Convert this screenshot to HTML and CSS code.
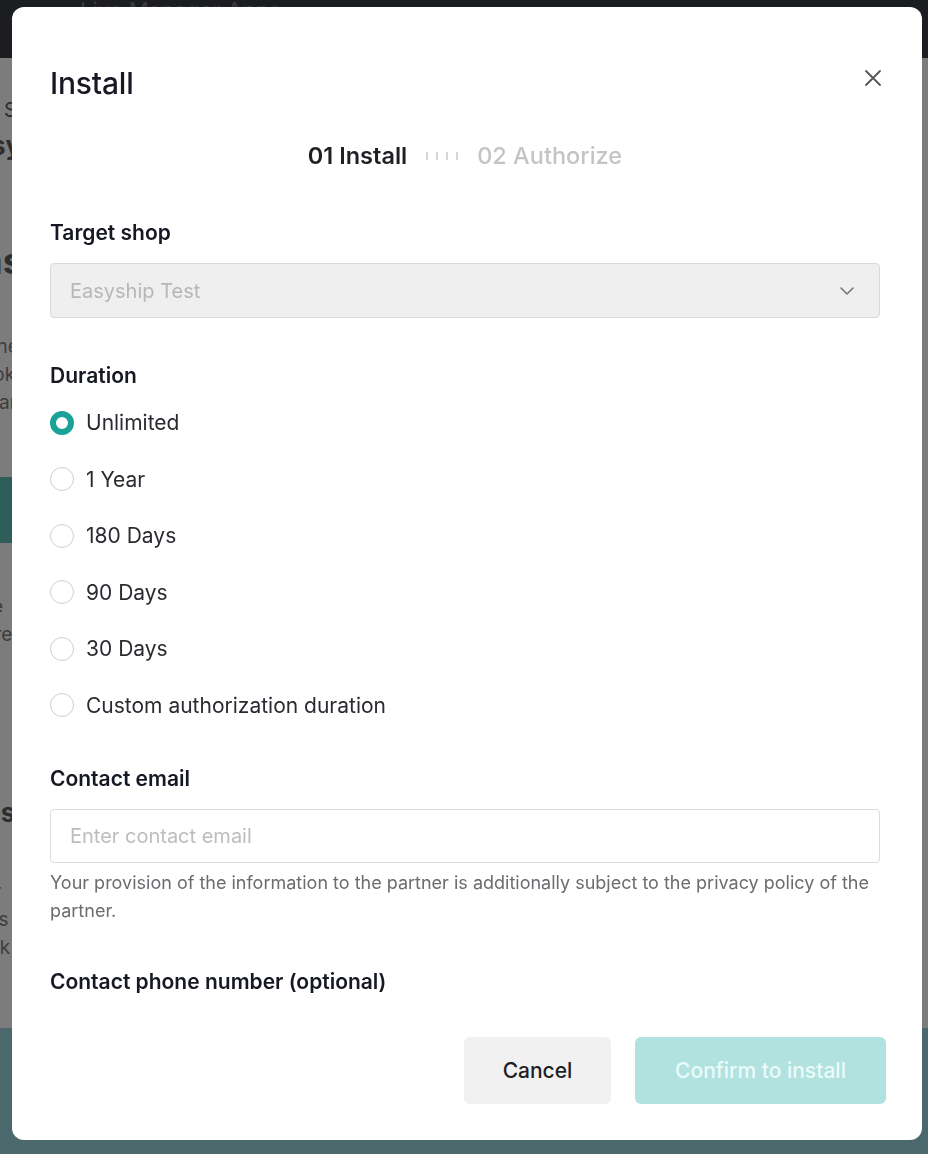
FILE: index.html
```html
<!DOCTYPE html>
<html lang="en">
<head>
  <meta charset="UTF-8" />
  <meta name="viewport" content="width=device-width, initial-scale=1.0"/>
  <title>Install</title>
  <link rel="stylesheet" href="styles.css">
</head>
<body>
  <!-- page behind the dialog -->
  <div class="page">
    <div class="page-top">Live Manager Apps</div>
    <div class="page-main">
      <div class="page-col">
        <p class="pg-small">App Store</p>
        <p class="pg-bold">Easyship</p>
        <p class="pg-big">Easyship</p>
        <p class="pg-text">Connection<br>Tiktok Shop<br>to start</p>
        <div class="pg-btn"></div>
        <p class="pg-text">Ease<br>Score<br>over</p>
        <p class="pg-bold pg-amp">Tips &amp;</p>
        <p class="pg-text">Your<br>Sales<br>Track</p>
      </div>
    </div>
    <div class="page-band"></div>
  </div>

  <div class="overlay">
    <div class="modal">
      <div class="modal-head">
        <h1>Install</h1>
        <button class="close-btn" aria-label="Close">
          <svg width="18" height="18" viewBox="0 0 18 18"><path d="M2 2L16 16M16 2L2 16" stroke="#555" stroke-width="1.8" stroke-linecap="round"/></svg>
        </button>
      </div>

      <div class="modal-body">
        <div class="steps">
          <span class="step active">01 Install</span>
          <span class="step-dots"><i></i><i></i><i></i><i></i></span>
          <span class="step">02 Authorize</span>
        </div>

        <div class="field field-shop">
          <div class="field-label">Target shop</div>
          <div class="select">
            <span>Easyship Test</span>
            <svg width="16" height="10" viewBox="0 0 16 10"><path d="M2 2L8 8L14 2" fill="none" stroke="#777" stroke-width="1.6" stroke-linecap="round" stroke-linejoin="round"/></svg>
          </div>
        </div>

        <div class="field">
          <div class="field-label">Duration</div>
          <div class="radios">
            <label class="radio checked"><span class="dot"></span>Unlimited</label>
            <label class="radio"><span class="dot"></span>1 Year</label>
            <label class="radio"><span class="dot"></span>180 Days</label>
            <label class="radio"><span class="dot"></span>90 Days</label>
            <label class="radio"><span class="dot"></span>30 Days</label>
            <label class="radio"><span class="dot"></span>Custom authorization duration</label>
          </div>
        </div>

        <div class="field field-email">
          <div class="field-label">Contact email</div>
          <input class="text-input" type="text" placeholder="Enter contact email" />
          <p class="hint">Your provision of the information to the partner is additionally subject to the privacy policy of the partner.</p>
        </div>

        <div class="field field-phone">
          <div class="field-label">Contact phone number (optional)</div>
        </div>
      </div>

      <div class="modal-foot">
        <button class="btn btn-cancel">Cancel</button>
        <button class="btn btn-confirm">Confirm to install</button>
      </div>
    </div>
  </div>
</body>
</html>
```

FILE: styles.css
```css
* {
  box-sizing: border-box;
}

html, body {
  margin: 0;
  height: 100%;
  overflow: hidden;
}

body {
  font-family: Inter, "Noto Sans", sans-serif;
  color: #161823;
  background: #7c7c7c;
}

/* background page (already dimmed) */
.page {
  display: flex;
  flex-direction: column;
  height: 100%;
}

.page-top {
  height: 58px;
  background: #1c1d21;
  color: #3a3b40;
  font-size: 22px;
  padding: 0 0 0 80px;
  line-height: 20px;
}

.page-main {
  flex: 1;
  background: #7c7c7c;
}

.page-col {
  width: 12px;
  overflow: hidden;
  color: #2e2e2e;
}

.page-col p {
  margin: 0;
  margin-left: -40px;
  white-space: nowrap;
}

.pg-small {
  font-size: 20px;
  padding-top: 40px;
}

.pg-bold {
  font-size: 26px;
  font-weight: 700;
  margin-top: 8px !important;
}

.pg-big {
  font-size: 36px;
  font-weight: 700;
  margin-top: 78px !important;
}

.pg-text {
  font-size: 19px;
  line-height: 28px;
  margin-top: 50px !important;
  color: #3d3d3d;
}

.pg-btn {
  width: 56px;
  height: 66px;
  margin-top: 60px;
  background: #2f5e5a;
}

.pg-amp {
  margin-top: 120px !important;
}

.page-band {
  height: 126px;
  background: #4b686c;
}

/* dialog */
.overlay {
  position: fixed;
  inset: 0;
  padding: 7px 6px 14px 12px;
}

.modal {
  height: 1133px;
  background: #fff;
  border-radius: 12px;
  display: flex;
  flex-direction: column;
  overflow: hidden;
}

.modal-head {
  display: flex;
  justify-content: space-between;
  align-items: center;
  padding: 58px 40px 0 38px;
}

.modal-head h1 {
  margin: 0;
  font-size: 30px;
  font-weight: 500;
  letter-spacing: -0.2px;
}

.close-btn {
  border: 0;
  background: none;
  padding: 0;
  margin-top: -8px;
  cursor: pointer;
}

.modal-body {
  flex: 1;
  overflow: hidden;
  padding: 0 42px 0 38px;
}

.steps {
  display: flex;
  justify-content: center;
  align-items: center;
  gap: 19px;
  margin: 40px 0 0 0;
  font-size: 23.5px;
  font-weight: 500;
}

.step {
  color: #c4c4c6;
}

.step.active {
  color: #1f1f24;
  font-weight: 600;
}

.step-dots {
  display: flex;
  gap: 8px;
}

.step-dots i {
  width: 2px;
  height: 8px;
  background: #d6d6d8;
}

.field {
  margin-top: 45px;
}

.field-shop {
  margin-top: 50px;
}

.field-email {
  margin-top: 48px;
}

.field-phone {
  margin-top: 44px;
}

.field-label {
  font-size: 21px;
  font-weight: 600;
  margin-bottom: 18px;
}

.select {
  height: 55px;
  display: flex;
  justify-content: space-between;
  align-items: center;
  padding: 0 24px 0 19px;
  background: #efefef;
  border: 1px solid #d9d9db;
  border-radius: 4px;
  font-size: 20px;
  color: #b7b7ba;
}

.radios {
  display: flex;
  flex-direction: column;
  gap: 31.6px;
  margin-top: 22px;
}

.radio {
  display: flex;
  align-items: center;
  gap: 12px;
  font-size: 21px;
  color: #2a2a30;
  height: 25px;
}

.radio .dot {
  width: 24px;
  height: 24px;
  border-radius: 50%;
  border: 1.5px solid #cfcfd2;
  background: #fff;
}

.radio.checked .dot {
  border: 6.5px solid #1aa198;
}

.text-input {
  display: block;
  width: 100%;
  height: 54px;
  border: 1px solid #dcdcde;
  border-radius: 4px;
  padding: 0 19px;
  font-family: inherit;
  font-size: 20px;
  color: #161823;
  outline: none;
}

.text-input::placeholder {
  color: #bdbdc0;
}

.hint {
  margin: 6px 0 0;
  font-size: 18px;
  line-height: 28px;
  color: #6c6c70;
}

.modal-foot {
  display: flex;
  justify-content: flex-end;
  gap: 24px;
  padding: 0 36px 36px 0;
}

.btn {
  height: 67px;
  border: 0;
  border-radius: 6px;
  font-family: inherit;
  font-size: 21px;
  font-weight: 500;
  padding: 0 38px;
  cursor: pointer;
}

.btn-cancel {
  background: #f1f1f2;
  color: #1f1f24;
  width: 147px;
}

.btn-confirm {
  background: #b1e2df;
  color: #eafbfa;
  width: 251px;
}
```
